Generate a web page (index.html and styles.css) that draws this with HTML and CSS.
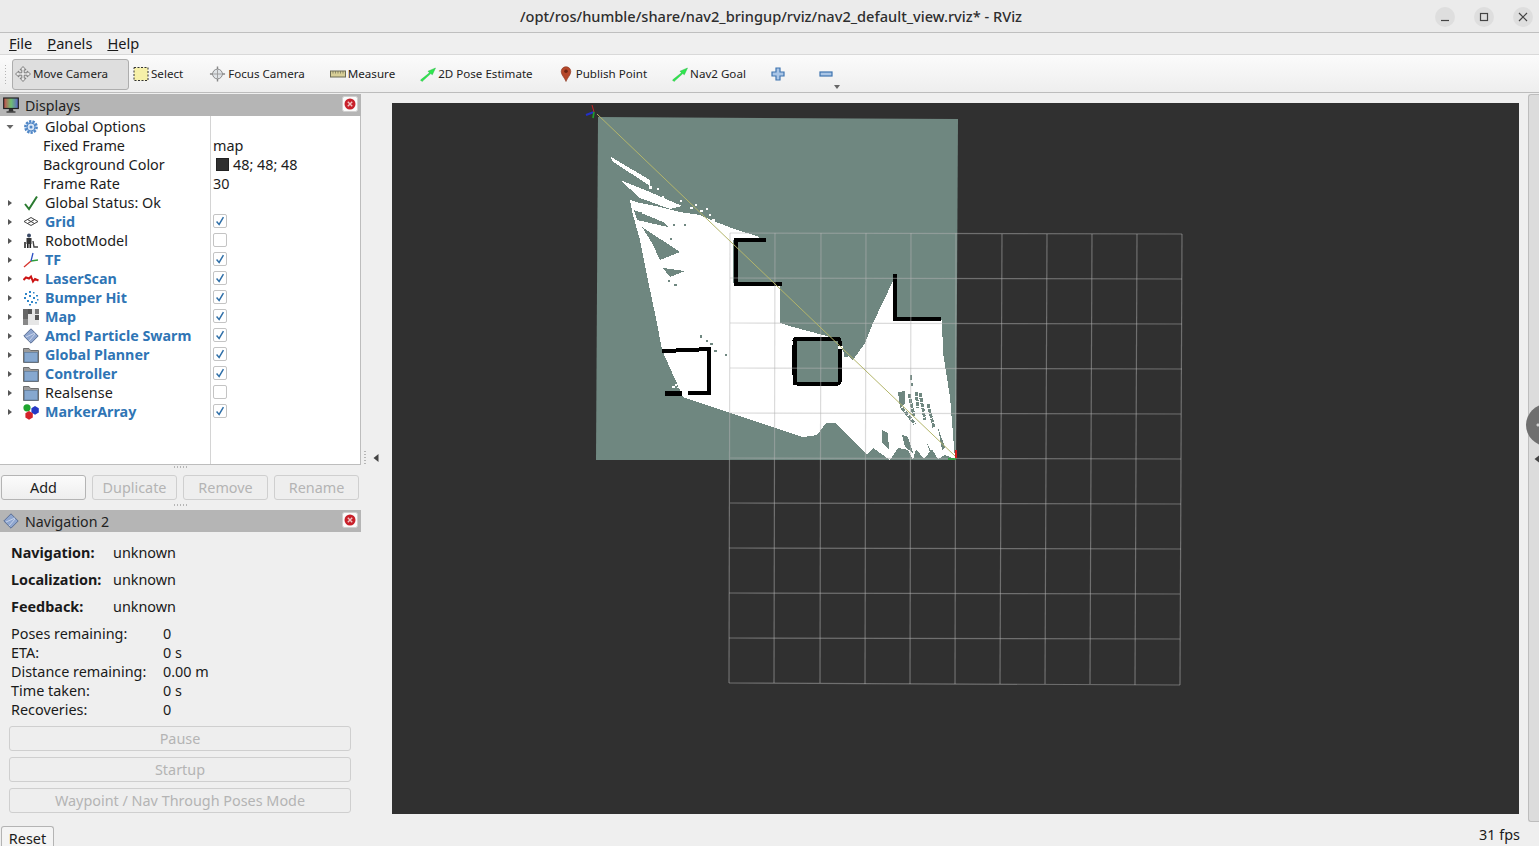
FILE: index.html
```html
<!DOCTYPE html>
<html lang="en">
<head>
<meta charset="utf-8">
<title>RViz</title>
<link rel="stylesheet" href="styles.css">
</head>
<body>
<svg class="defs" width="0" height="0" aria-hidden="true">
  <defs>
    <symbol id="i-check" viewBox="0 0 14 14"><path d="M3 7.5 L6 11 L11 2.5" fill="none" stroke="#2f6fa8" stroke-width="1.7"/></symbol>
    <symbol id="i-right" viewBox="0 0 10 10"><path d="M3 2 L7 5 L3 8 Z" fill="#555"/></symbol>
    <symbol id="i-down" viewBox="0 0 10 10"><path d="M1.5 3 L8.5 3 L5 7 Z" fill="#666"/></symbol>
    <symbol id="i-close" viewBox="0 0 16 16"><rect x=".5" y=".5" width="15" height="15" rx="2" fill="#fafafa" stroke="#cfcfcf"/><circle cx="8" cy="8" r="5.5" fill="#c8202a"/><path d="M5.8 5.8 L10.2 10.2 M10.2 5.8 L5.8 10.2" stroke="#f2c4c4" stroke-width="1.4"/></symbol>
    <symbol id="i-folder" viewBox="0 0 16 16"><path d="M.5 15.5 V1.5 H6 L7.5 3.5 H15.5 V15.5 Z" fill="#9a9a9a" stroke="#6e6e6e"/><rect x="1.5" y="5.5" width="13" height="9.5" fill="#86a8d0" stroke="#5d7d9f" stroke-width=".7"/></symbol>
    <symbol id="i-diamond" viewBox="0 0 16 16"><path d="M8 .8 L15.2 8 L8 15.2 L.8 8 Z" fill="#8fa6cf" stroke="#5a6f94"/><path d="M3 9 L12 5 M6 13 L12 6" stroke="#dfe7f5" stroke-width=".7"/></symbol>
    <symbol id="i-arrow" viewBox="0 0 16 16"><path d="M.5 14 L9.5 6.8 L8 5.2 L15.5 2 L12.3 8.8 L10.8 7.6 L2 15.5 Z" fill="#2ee84e" stroke="#1aa836" stroke-width=".4"/></symbol>
  </defs>
</svg>

<header class="titlebar">
  <div class="title">/opt/ros/humble/share/nav2_bringup/rviz/nav2_default_view.rviz* - RViz</div>
  <div class="wm">
    <span class="wm-btn"><svg width="20" height="20" viewBox="0 0 20 20"><path d="M6 13.5 H14" stroke="#444" stroke-width="1.2"/></svg></span>
    <span class="wm-btn"><svg width="20" height="20" viewBox="0 0 20 20"><rect x="6.5" y="6.5" width="7" height="7" fill="none" stroke="#444" stroke-width="1.2"/></svg></span>
    <span class="wm-btn"><svg width="20" height="20" viewBox="0 0 20 20"><path d="M6 6 L14 14 M14 6 L6 14" stroke="#444" stroke-width="1.2"/></svg></span>
  </div>
</header>

<nav class="menubar">
  <span class="menu"><u>F</u>ile</span>
  <span class="menu"><u>P</u>anels</span>
  <span class="menu"><u>H</u>elp</span>
</nav>

<div class="toolbar">
  <span class="grip"></span>
  <div class="tool tool-active">
    <svg class="ticon" viewBox="0 0 16 16"><path d="M8 .5 L11 3.8 H9.2 V6.8 H12.2 V5 L15.5 8 L12.2 11 V9.2 H9.2 V12.2 H11 L8 15.5 L5 12.2 H6.8 V9.2 H3.8 V11 L.5 8 L3.8 5 V6.8 H6.8 V3.8 H5 Z" fill="#e9e9e9" stroke="#666" stroke-width=".8"/></svg>
    <span>Move Camera</span>
  </div>
  <div class="tool tool-select">
    <svg class="ticon" viewBox="0 0 16 16"><rect x="1" y="1.5" width="14" height="13" fill="#f6f0a8" stroke="#333" stroke-width="1" stroke-dasharray="2 1.5"/></svg>
    <span>Select</span>
  </div>
  <div class="tool">
    <svg class="ticon ticon-lg" viewBox="0 0 18 18"><path d="M9 .5 V17.5 M.5 9 H17.5" stroke="#888" stroke-width="1.6"/><circle cx="9" cy="9" r="5.5" fill="#dfe3e6" stroke="#808080"/><path d="M9 4.5 V13.5 M4.5 9 H13.5" stroke="#999"/></svg>
    <span>Focus Camera</span>
  </div>
  <div class="tool">
    <svg class="ticon" viewBox="0 0 16 16"><rect x=".5" y="5" width="15" height="6" fill="#d8cf97" stroke="#6b6b55"/><path d="M3 5 V7.5 M5.5 5 V7.5 M8 5 V7.5 M10.5 5 V7.5 M13 5 V7.5" stroke="#6b6b55" stroke-width=".7"/></svg>
    <span>Measure</span>
  </div>
  <div class="tool">
    <svg class="ticon"><use href="#i-arrow"/></svg>
    <span>2D Pose Estimate</span>
  </div>
  <div class="tool">
    <svg class="ticon" viewBox="0 0 16 16"><path d="M8 15.5 C6.5 11.5 3.2 9 3.2 5.5 A4.8 4.8 0 0 1 12.8 5.5 C12.8 9 9.5 11.5 8 15.5 Z" fill="#b5472a" stroke="#8a3520" stroke-width=".6"/><circle cx="8" cy="5.3" r="1.8" fill="#6e2412"/></svg>
    <span>Publish Point</span>
  </div>
  <div class="tool">
    <svg class="ticon"><use href="#i-arrow"/></svg>
    <span>Nav2 Goal</span>
  </div>
  <div class="tool tool-plus">
    <svg class="ticon ticon-sm" viewBox="0 0 14 14"><path d="M5 1 H9 V5 H13 V9 H9 V13 H5 V9 H1 V5 H5 Z" fill="#a9c5e6" stroke="#3f74b0" stroke-width="1.2"/></svg>
  </div>
  <div class="tool tool-minus">
    <svg class="ticon ticon-sm" viewBox="0 0 14 14"><rect x="1" y="5" width="12" height="4" fill="#a9c5e6" stroke="#3f74b0" stroke-width="1.2"/></svg>
    <svg class="more" width="6" height="4" viewBox="0 0 6 4"><path d="M0 0 H6 L3 4 Z" fill="#666"/></svg>
  </div>
</div>

<main class="main">
  <aside class="dock">
    <div class="panel-head">
      <svg class="head-icon" viewBox="0 0 16 16"><defs><linearGradient id="scr" x1="0" x2="1"><stop offset="0" stop-color="#c84a4a"/><stop offset=".5" stop-color="#6fbf72"/><stop offset="1" stop-color="#5a63c8"/></linearGradient></defs><rect x=".7" y="1" width="14.6" height="10.5" fill="url(#scr)" stroke="#222" stroke-width="1.2"/><path d="M6 12 H10 L10.5 14.5 H5.5 Z" fill="#333"/><path d="M3.5 15 H12.5" stroke="#222" stroke-width="1.2"/></svg>
      <span class="head-title">Displays</span>
      <svg class="head-close"><use href="#i-close"/></svg>
    </div>

    <div class="tree">
      <div class="row"><div class="name"><svg class="exp"><use href="#i-down"/></svg><svg class="ico" viewBox="0 0 16 16"><circle cx="8" cy="8" r="5.6" fill="#bcd3ee" stroke="#4f86c6" stroke-width="2.6" stroke-dasharray="2.2 1.2"/><circle cx="8" cy="8" r="4" fill="#d6e4f5" stroke="#4f86c6"/><circle cx="8" cy="8" r="1.5" fill="#4f86c6"/></svg><span>Global Options</span></div><div class="val"></div></div>
      <div class="row"><div class="name name-sub">Fixed Frame</div><div class="val val-text">map</div></div>
      <div class="row"><div class="name name-sub">Background Color</div><div class="val val-text"><span class="swatch"></span>48; 48; 48</div></div>
      <div class="row"><div class="name name-sub">Frame Rate</div><div class="val val-text">30</div></div>
      <div class="row"><div class="name"><svg class="exp"><use href="#i-right"/></svg><svg class="ico" viewBox="0 0 16 16"><path d="M2 9 L6 14 L14 1.5" fill="none" stroke="#2a7a30" stroke-width="2"/></svg><span>Global Status: Ok</span></div><div class="val"></div></div>
      <div class="row"><div class="name on"><svg class="exp"><use href="#i-right"/></svg><svg class="ico" viewBox="0 0 16 16"><path d="M8 3.5 L15 7.5 L8 11.5 L1 7.5 Z M4.5 5.5 L11.5 9.5 M11.5 5.5 L4.5 9.5" fill="none" stroke="#444" stroke-width="1"/></svg><span>Grid</span></div><div class="val"><span class="cb"><svg><use href="#i-check"/></svg></span></div></div>
      <div class="row"><div class="name"><svg class="exp"><use href="#i-right"/></svg><svg class="ico" viewBox="0 0 16 16"><circle cx="6" cy="2.5" r="2" fill="#3b4a66"/><rect x="3.5" y="5" width="5" height="6" fill="#333"/><rect x="1" y="9" width="2" height="6" fill="#555"/><rect x="4" y="11" width="1.6" height="4" fill="#222"/><rect x="6.5" y="11" width="1.6" height="4" fill="#222"/><path d="M10 8 L11 14 H15" fill="none" stroke="#444" stroke-width="1.4"/></svg><span>RobotModel</span></div><div class="val"><span class="cb"></span></div></div>
      <div class="row"><div class="name on"><svg class="exp"><use href="#i-right"/></svg><svg class="ico" viewBox="0 0 16 16"><path d="M8 9 L1 15" stroke="#d6342c" stroke-width="1.3"/><path d="M8 9 L15 8" stroke="#2f9e3b" stroke-width="1.3"/><path d="M8 9 L10 1" stroke="#2c4fc4" stroke-width="1.3"/></svg><span>TF</span></div><div class="val"><span class="cb"><svg><use href="#i-check"/></svg></span></div></div>
      <div class="row"><div class="name on"><svg class="exp"><use href="#i-right"/></svg><svg class="ico" viewBox="0 0 16 16"><path d="M.5 9 L3 6.5 L6 7.5 L8 5.5 L10 10.5 L12 8 L15.5 9.5" fill="none" stroke="#cc1414" stroke-width="2"/></svg><span>LaserScan</span></div><div class="val"><span class="cb"><svg><use href="#i-check"/></svg></span></div></div>
      <div class="row"><div class="name on"><svg class="exp"><use href="#i-right"/></svg><svg class="ico" viewBox="0 0 16 16"><g fill="#2f86c9"><rect x="6" y="1" width="2" height="2"/><rect x="10" y="2" width="1.5" height="1.5"/><rect x="2" y="3" width="2" height="2"/><rect x="13" y="5" width="2" height="1.5"/><rect x="6" y="5" width="2" height="2"/><rect x="1" y="7" width="2" height="2"/><rect x="10" y="7" width="2" height="2"/><rect x="14" y="9" width="1.5" height="1.5"/><rect x="4" y="10" width="2" height="2"/><rect x="8" y="11" width="2" height="2"/><rect x="12" y="12" width="2" height="1.5"/><rect x="6" y="14" width="2" height="1.5"/></g></svg><span>Bumper Hit</span></div><div class="val"><span class="cb"><svg><use href="#i-check"/></svg></span></div></div>
      <div class="row"><div class="name on"><svg class="exp"><use href="#i-right"/></svg><svg class="ico" viewBox="0 0 16 16"><rect width="16" height="16" fill="#e6e6e6"/><g fill="#666"><rect width="5" height="5"/><rect y="5" width="5" height="5"/><rect y="10" width="5" height="6" fill="#888"/><rect x="5" width="4" height="5" fill="#555"/><rect x="12" width="4" height="5" fill="#777"/><rect x="12" y="6" width="4" height="5" fill="#555"/></g></svg><span>Map</span></div><div class="val"><span class="cb"><svg><use href="#i-check"/></svg></span></div></div>
      <div class="row"><div class="name on"><svg class="exp"><use href="#i-right"/></svg><svg class="ico"><use href="#i-diamond"/></svg><span>Amcl Particle Swarm</span></div><div class="val"><span class="cb"><svg><use href="#i-check"/></svg></span></div></div>
      <div class="row"><div class="name on"><svg class="exp"><use href="#i-right"/></svg><svg class="ico"><use href="#i-folder"/></svg><span>Global Planner</span></div><div class="val"><span class="cb"><svg><use href="#i-check"/></svg></span></div></div>
      <div class="row"><div class="name on"><svg class="exp"><use href="#i-right"/></svg><svg class="ico"><use href="#i-folder"/></svg><span>Controller</span></div><div class="val"><span class="cb"><svg><use href="#i-check"/></svg></span></div></div>
      <div class="row"><div class="name"><svg class="exp"><use href="#i-right"/></svg><svg class="ico"><use href="#i-folder"/></svg><span>Realsense</span></div><div class="val"><span class="cb"></span></div></div>
      <div class="row"><div class="name on"><svg class="exp"><use href="#i-right"/></svg><svg class="ico" viewBox="0 0 16 16"><circle cx="4" cy="3.8" r="3.6" fill="#1fa52e"/><path d="M12 2 L15.8 4.2 V8.4 L12 10.8 L8.4 8.4 V4.2 Z" fill="#2438c4"/><path d="M6 7 L9.8 9.2 V13.4 L6 15.8 L2.4 13.4 V9.2 Z" fill="#d3232a"/></svg><span>MarkerArray</span></div><div class="val"><span class="cb"><svg><use href="#i-check"/></svg></span></div></div>
      <div class="row row-fill"><div class="name"></div><div class="val"></div></div>
    </div>

    <div class="dots"></div>
    <div class="btn-row">
      <button class="btn">Add</button>
      <button class="btn" disabled>Duplicate</button>
      <button class="btn" disabled>Remove</button>
      <button class="btn" disabled>Rename</button>
    </div>
    <div class="dots dots-2"></div>

    <div class="panel-head">
      <svg class="head-icon"><use href="#i-diamond"/></svg>
      <span class="head-title">Navigation 2</span>
      <svg class="head-close"><use href="#i-close"/></svg>
    </div>

    <div class="nav-status">
      <b>Navigation:</b><span>unknown</span>
      <b>Localization:</b><span>unknown</span>
      <b>Feedback:</b><span>unknown</span>
    </div>
    <div class="nav-metrics">
      <span>Poses remaining:</span><span>0</span>
      <span>ETA:</span><span>0 s</span>
      <span>Distance remaining:</span><span>0.00 m</span>
      <span>Time taken:</span><span>0 s</span>
      <span>Recoveries:</span><span>0</span>
    </div>
    <div class="nav-btns">
      <button class="btn" disabled>Pause</button>
      <button class="btn" disabled>Startup</button>
      <button class="btn" disabled>Waypoint / Nav Through Poses Mode</button>
    </div>
  </aside>

  <div class="splitter"><svg width="6" height="8" viewBox="0 0 6 8"><path d="M5.5 0 V8 L.5 4 Z" fill="#444"/></svg></div>

  <div class="viewport">
    <svg class="scene" viewBox="392 103 1127 711" width="1127" height="711">
      <polygon points="598,117 958,119 956,460 596,460" fill="#6f8780"/>
      <g class="pixels" fill="#fff">
        <polygon points="611,157 650,180 650,186 612,161"/>
        <polygon points="620,180 650,192 682,206 670,209 640,198"/>
        <polygon points="630,200 640,203 660,207 680,212 700,215 716,222 737,230 757,236 763,240 733,240 733,283 780,286 780,323 793,327 823,335 840,340 843,352 853,360 865,343 873,323 893,281 895,319 942,320 943,353 950,397 955,459 945,455 938,459 932,449 924,459 916,449 913,460 908,450 898,448 890,460 873,448 867,455 843,430 835,423 826,423 817,435 803,437 730,413 683,397 662,350 657,323 650,290 640,240 633,215"/>
        <rect x="649" y="186" width="3" height="3"/><rect x="657" y="188" width="2" height="2"/><rect x="690" y="207" width="3" height="2"/><rect x="700" y="210" width="3" height="2"/><rect x="672" y="204" width="3" height="2"/><rect x="709" y="214" width="2" height="2"/><rect x="695" y="204" width="2" height="2"/><rect x="680" y="200" width="2" height="2"/><rect x="662" y="196" width="2" height="2"/><rect x="706" y="208" width="2" height="2"/><rect x="712" y="219" width="3" height="2"/>
      </g>
      <g class="pixels" fill="#6f8780">
        <polygon points="634,210 663,222 668,227 637,220"/>
        <polygon points="642,227 680,252 660,260 652,243"/>
        <polygon points="663,268 685,271 670,277"/>
        <polygon points="882,430 888,433 889,450 882,443"/>
        <polygon points="902,435 908,437 913,453 905,447"/>
        <polygon points="927,443 932,453 938,458 931,456"/>
        <polygon points="938,428 945,447 942,450"/>
        <polygon points="898,392 905,391 905,404 900,408"/>
        <rect x="670" y="238" width="2" height="2"/><rect x="674" y="284" width="3" height="2"/><rect x="668" y="280" width="2" height="2"/><rect x="652" y="220" width="2" height="2"/><rect x="673" y="224" width="2" height="2"/><rect x="684" y="224" width="2" height="2"/><rect x="640" y="212" width="2" height="2"/>
        <rect x="700" y="335" width="2" height="3"/><rect x="706" y="340" width="2" height="2"/><rect x="710" y="343" width="3" height="2"/><rect x="714" y="350" width="3" height="2"/><rect x="725" y="354" width="2" height="2"/>
        <rect x="910" y="375" width="2" height="5"/><rect x="911" y="383" width="2" height="3"/>
      </g>
      <g class="pixels" fill="none" stroke="#6f8780" stroke-width="3" stroke-dasharray="4 1">
        <path d="M909 394 L914 416"/><path d="M920 393 L925 420"/><path d="M928 404 L934 428"/><path d="M902 408 L915 424"/><path d="M916 392 L918 408"/>
      </g>
      <g class="pixels" fill="#fff">
        <polygon points="707,353 700,355 677,388 684,390 695,375"/>
        <rect x="672" y="386" width="3" height="2"/><rect x="677" y="380" width="3" height="2"/><rect x="684" y="374" width="3" height="2"/><rect x="680" y="376" width="2" height="2"/><rect x="675" y="384" width="2" height="2"/>
      </g>
      <g class="pixels" fill="none" stroke="#000" stroke-width="3">
        <path d="M766 240 H736 V284 H782" stroke-width="3.5"/>
        <path d="M895 274 V319 H941" stroke-width="3.5"/>
        <path d="M662 351 L690 350 L709 349 V393 H688" stroke-width="4"/>
        <path d="M665 393 H682" stroke-width="5"/>
      </g>
      <rect class="pixels" x="794.5" y="338.5" width="45" height="45" rx="2" fill="#6f8780" stroke="#000" stroke-width="4"/>
      <rect x="792" y="345" width="4" height="30" fill="#000"/>
      <rect x="838" y="346" width="5" height="3" fill="#fff"/>
      <rect x="844" y="352" width="4" height="5" fill="#6f8780"/>

      <g class="grid-lines">
        <path d="M730 233 L1182 234"/><path d="M730 278 L1182 279"/><path d="M730 323 L1182 324"/><path d="M730 368 L1182 369"/><path d="M730 413 L1181 414"/><path d="M730 458 L1181 459"/><path d="M730 503 L1181 504"/><path d="M729 548 L1181 549"/><path d="M729 593 L1180 594"/><path d="M729 638 L1180 639"/><path d="M729 683 L1180 685"/>
        <path d="M730 233 L729 683"/><path d="M775 233 L774 683"/><path d="M821 233 L820 683"/><path d="M866 233 L865 684"/><path d="M911 233 L910 684"/><path d="M956 233 L955 684"/><path d="M1002 234 L1000 684"/><path d="M1047 234 L1045 684"/><path d="M1092 234 L1090 684"/><path d="M1137 234 L1135 685"/><path d="M1182 234 L1180 685"/>
      </g>
      <path d="M597 114 L955 456" stroke="#b3b56a" stroke-width="1" fill="none"/>
      <path d="M594 112 L586 115" stroke="#2330c8" stroke-width="2"/>
      <path d="M594 112 L592 105" stroke="#c82323" stroke-width="1"/>
      <path d="M594 112 L593 118" stroke="#1ea02e" stroke-width="1.6"/>
      <path d="M956 458 V450" stroke="#d01c1c" stroke-width="2"/>
      <path d="M956 459 H948" stroke="#1ea02e" stroke-width="1.5"/>
    </svg>
  </div>

  <div class="right-dock">
    <span class="ball"></span>
    <svg class="right-tri" width="6" height="8" viewBox="0 0 6 8"><path d="M5.5 0 V8 L.5 4 Z" fill="#444"/></svg>
  </div>
</main>

<footer class="statusbar">
  <button class="reset">Reset</button>
  <span class="fps">31 fps</span>
</footer>
</body>
</html>
```
FILE: styles.css
```css
* { box-sizing: border-box; }
html, body { margin: 0; height: 846px; overflow: hidden; }
body {
  display: flex;
  flex-direction: column;
  width: 1539px;
  background: #efefef;
  color: #1a1a1a;
  font-family: "Noto Sans", "Open Sans", "Liberation Sans", sans-serif;
  font-size: 14.4px;
}
.defs { position: absolute; }

/* title bar */
.titlebar {
  flex: none;
  height: 33px;
  display: flex;
  align-items: center;
  justify-content: center;
  position: relative;
  background: #ebebeb;
  border-bottom: 1px solid #bfbfbf;
}
.title { font-weight: 500; font-size: 14.6px; color: #2e2e2e; padding: 0 0 1px 3px; }
.wm {
  position: absolute;
  right: 6px;
  top: 7px;
  display: flex;
  gap: 19px;
}
.wm-btn {
  width: 20px;
  height: 20px;
  border-radius: 50%;
  background: #dedede;
  display: block;
}
.wm-btn svg { display: block; }

/* menu */
.menubar {
  flex: none;
  height: 22px;
  display: flex;
  align-items: center;
  gap: 15px;
  padding: 0 9px 2px;
  background: #efefef;
  border-bottom: 1px solid #d9d9d9;
  font-size: 14.6px;
}

/* toolbar */
.toolbar {
  flex: none;
  height: 38px;
  display: flex;
  align-items: center;
  padding: 2px 0 0 4px;
  background: linear-gradient(#fbfbfb, #eeeeee);
  border-bottom: 1px solid #bcbcbc;
  font-size: 11.6px;
  color: #222;
}
.grip {
  width: 3px;
  height: 22px;
  margin-right: 5px;
  background: radial-gradient(circle, #b5b5b5 40%, transparent 45%) 0 0 / 3px 3px;
}
.tool {
  display: flex;
  align-items: center;
  gap: 2px;
  height: 31px;
  padding: 0 12.5px 2px;
  position: relative;
  white-space: nowrap;
}
.tool-active {
  width: 117px;
  padding: 0 0 2px 2px;
  background: #dedede;
  border: 1px solid #adadad;
  border-radius: 3px;
}
.tool-select { padding-left: 4px; padding-right: 13.5px; }
.ticon { width: 16px; height: 16px; flex: none; display: block; }
.ticon-lg { width: 17px; }
.ticon-sm { width: 14px; height: 14px; }
.tool-plus { padding: 0 14px 2px 13px; }
.tool-minus { padding: 0 0 2px 20px; }
.more { position: absolute; left: 35px; top: 26px; }

/* main area */
.main {
  flex: none;
  height: 729px;
  display: flex;
}
.dock {
  flex: none;
  width: 361px;
  padding-top: 1px;
  display: flex;
  flex-direction: column;
}
.panel-head {
  flex: none;
  height: 22px;
  display: flex;
  align-items: center;
  background: #b5b5b5;
  padding: 0 3px;
}
.head-icon { width: 16px; height: 16px; flex: none; }
.head-title { margin-left: 6px; font-size: 14.2px; color: #222; }
.head-close { width: 16px; height: 16px; margin: 0 0 2px auto; }

/* tree */
.tree {
  flex: none;
  height: 349px;
  display: flex;
  flex-direction: column;
  background: #fff;
  border-right: 1px solid #bdbdbd;
  border-bottom: 1px solid #bdbdbd;
}
.row {
  flex: none;
  height: 19px;
  display: grid;
  grid-template-columns: 210px 1fr;
  color: #1c1c1c;
}
.row-fill { flex: 1; }
.name {
  display: flex;
  align-items: center;
  white-space: nowrap;
  padding: 1px 0 0 5px;
}
.name-sub { padding-left: 43px; }
.name.on { color: #2f75b5; font-weight: 700; font-size: 14.3px; }
.exp { width: 10px; height: 10px; flex: none; }
.ico { width: 16px; height: 16px; flex: none; margin-left: 8px; margin-right: 6px; }
.val {
  display: flex;
  align-items: center;
  border-left: 1px solid #d4d4d4;
  padding-left: 2px;
}
.val-text { white-space: nowrap; padding-top: 1px; }
.swatch {
  width: 13px;
  height: 13px;
  margin: 0 4px 0 3px;
  background: #303030;
  border: 1px solid #222;
}
.cb {
  width: 14px;
  height: 14px;
  background: #fff;
  border: 1px solid #c4c4c4;
  border-radius: 2px;
  display: block;
}
.cb svg { display: block; width: 12px; height: 12px; }

/* buttons */
.dots {
  flex: none;
  height: 10px;
}
.dots::before {
  content: "";
  display: block;
  width: 16px;
  height: 2px;
  margin: 1px 0 0 173px;
  background: radial-gradient(circle, #b5b5b5 45%, transparent 50%) 0 0 / 3px 2px repeat-x;
}
.btn-row {
  flex: none;
  display: flex;
  gap: 6px;
  padding-left: 1px;
}
.btn {
  font: inherit;
  height: 25px;
  width: 85px;
  padding: 0;
  color: #1c1c1c;
  background: linear-gradient(#fbfbfb, #eeeeee);
  border: 1px solid #b4b4b4;
  border-radius: 3px;
}
.btn:disabled {
  color: #b4b4b4;
  background: #eeeeee;
  border-color: #cfcfcf;
}
.dots-2 { height: 10px; padding-top: 3px; }

/* navigation */
.nav-status {
  flex: none;
  display: grid;
  grid-template-columns: 102px 1fr;
  grid-auto-rows: 27px;
  align-items: center;
  padding: 7px 0 0 11px;
}
.nav-metrics {
  flex: none;
  display: grid;
  grid-template-columns: 152px 1fr;
  grid-auto-rows: 19px;
  align-items: center;
  padding: 4px 0 0 11px;
}
.nav-btns {
  flex: none;
  display: flex;
  flex-direction: column;
  gap: 6px;
  padding: 7px 10px 0 9px;
}
.nav-btns .btn { width: 100%; }

/* splitter & viewport */
.splitter {
  flex: none;
  width: 31px;
  display: flex;
  justify-content: flex-start;
  padding: 361px 0 0 3px;
}
.splitter::before {
  content: "";
  display: block;
  flex: none;
  width: 2px;
  height: 16px;
  margin: -4px 7px 0 0;
  background: radial-gradient(circle, #b5b5b5 45%, transparent 50%) 0 0 / 2px 3px repeat-y;
}
.viewport {
  flex: none;
  width: 1127px;
  height: 711px;
  margin-top: 10px;
  background: #303030;
}
.scene { display: block; }
.pixels { shape-rendering: crispEdges; }
.grid-lines path { fill: none; stroke: rgba(180,180,180,.48); stroke-width: 1.2; }

.right-dock {
  flex: none;
  width: 11px;
  margin-left: 9px;
  margin-top: 1px;
  position: relative;
  background: #dcdcdc;
  border: 1px solid #bdbdbd;
  border-right: 0;
  border-radius: 3px 0 0 3px;
}
.ball {
  position: absolute;
  left: -3px;
  top: 309px;
  width: 42px;
  height: 42px;
  border-radius: 50%;
  background: radial-gradient(circle at 12px 21px, #cfcfcf 1px, #6f6f6f 2px);
}
.right-tri { position: absolute; left: 5px; top: 360px; }

/* status */
.statusbar {
  flex: 1;
  display: flex;
  justify-content: space-between;
  align-items: flex-start;
  padding: 4px 19px 0 1px;
  background: #efefef;
  overflow: hidden;
}
.reset {
  font: inherit;
  width: 53px;
  height: 23px;
  padding: 0;
  color: #1c1c1c;
  background: #f4f4f4;
  border: 1px solid #b4b4b4;
  border-bottom: 0;
  border-radius: 3px 3px 0 0;
}
.fps { margin-top: -1px; }
```
